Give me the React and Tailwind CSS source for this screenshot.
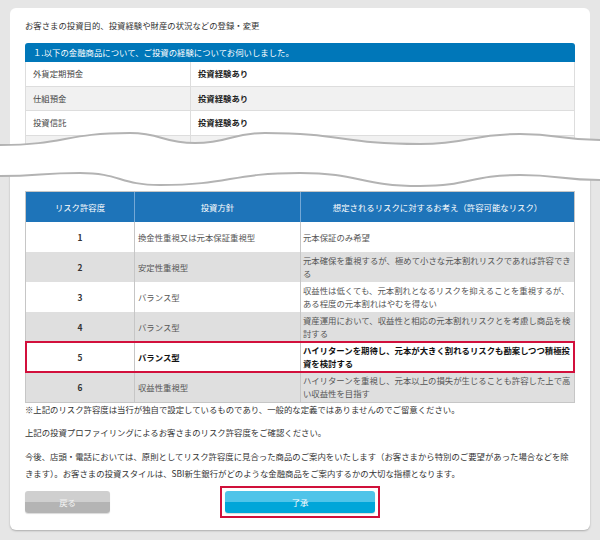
import React from 'react';

const experience = [
    { name: '外貨定期預金', value: '投資経験あり' },
    { name: '仕組預金', value: '投資経験あり' },
    { name: '投資信託', value: '投資経験あり' },
    { name: '', value: '' },
];

const riskRows = [
    { level: '1', policy: '換金性重視又は元本保証重視型', desc: '元本保証のみ希望' },
    { level: '2', policy: '安定性重視型', desc: '元本確保を重視するが、極めて小さな元本割れリスクであれば許容できる' },
    { level: '3', policy: 'バランス型', desc: '収益性は低くても、元本割れとなるリスクを抑えることを重視するが、ある程度の元本割れはやむを得ない' },
    { level: '4', policy: 'バランス型', desc: '資産運用において、収益性と相応の元本割れリスクとを考慮し商品を検討する' },
    { level: '5', policy: 'バランス型', desc: 'ハイリターンを期待し、元本が大きく割れるリスクも勘案しつつ積極投資を検討する', selected: true },
    { level: '6', policy: '収益性重視型', desc: 'ハイリターンを重視し、元本以上の損失が生じることも許容した上で高い収益性を目指す' },
];

// torn-paper break between the two halves of the page
const Wave = () => (
    <div className="relative h-[20px]">
        <svg className="absolute left-0 top-[-20px] z-10" width="600" height="60" viewBox="0 0 600 60">
            <path
                d="M0 15 C65 15 65 3 130 3 C162 3 162 13 195 13 C230 13 230 3 265 3 C342 3 342 14 420 14 C470 14 470 4 520 4 C560 4 560 10 600 10 L600 50 C560 50 560 45 520 45 C470 45 470 56 420 56 C360 56 360 43 300 43 C230 43 230 55 160 55 C120 55 120 43 80 43 C40 43 40 46 0 46 Z"
                fill="#ffffff"
            />
            <path
                d="M0 15 C65 15 65 3 130 3 C162 3 162 13 195 13 C230 13 230 3 265 3 C342 3 342 14 420 14 C470 14 470 4 520 4 C560 4 560 10 600 10"
                fill="none"
                stroke="#b3b3b3"
                strokeWidth="2"
            />
            <path
                d="M0 46 C40 46 40 43 80 43 C120 43 120 55 160 55 C230 55 230 43 300 43 C360 43 360 56 420 56 C470 56 470 45 520 45 C560 45 560 50 600 50"
                fill="none"
                stroke="#b3b3b3"
                strokeWidth="2"
            />
        </svg>
    </div>
);

const App = () => {
    return (
        <div className="w-[600px] h-[540px] overflow-hidden bg-[#e6e6e6] pt-[8px] font-['Noto_Sans_CJK_JP','Noto_Sans',sans-serif] text-[8.4px] text-[#333]">
            {/* upper part */}
            <div className="mx-[10px] h-[142px] overflow-hidden rounded-t-[6px] bg-white px-[15px] pt-[11px]">
                <p className="leading-[12px] text-[#333]">お客さまの投資目的、投資経験や財産の状況などの登録・変更</p>
                <div className="mt-[12px] h-[19px] rounded-t-[3px] bg-[#0077b9] pl-[8px] leading-[19px] text-white">
                    １.以下の金融商品について、ご投資の経験についてお伺いしました。
                </div>
                <div className="border-x border-[#dddddd]">
                    {experience.map((row, i) => (
                        <div
                            key={i}
                            className={`grid h-[24.5px] grid-cols-[165px_1fr] items-center border-b border-[#dddddd] ${i % 2 ? 'bg-[#f1f1f1]' : 'bg-white'}`}
                        >
                            <div className="flex h-full items-center border-r border-[#dddddd] pl-[7px] text-[#444]">{row.name}</div>
                            <div className="pl-[7px] font-bold text-[#222]">{row.value}</div>
                        </div>
                    ))}
                </div>
            </div>

            <Wave />

            {/* lower part */}
            <div className="mx-[10px] h-[360px] rounded-b-[6px] bg-white px-[15px] pt-[21px] shadow-[0_1px_2px_rgba(0,0,0,0.25)]">
                <div className="border border-[#c6c6c6]">
                    <div className="grid h-[30px] grid-cols-[108px_166px_1fr] bg-[#1e74b9] text-white">
                        <div className="flex items-center justify-center">リスク許容度</div>
                        <div className="flex items-center justify-center border-l border-[#74a8d6]">投資方針</div>
                        <div className="flex items-center justify-center border-l border-[#74a8d6]">想定されるリスクに対するお考え（許容可能なリスク）</div>
                    </div>
                    {riskRows.map((row, i) => (
                        <div
                            key={row.level}
                            className={`relative grid h-[30px] grid-cols-[108px_166px_1fr] ${i % 2 ? 'bg-[#dfdfdf]' : 'bg-white'} ${row.selected ? 'z-10 outline-2 outline-[#d2103c] -outline-offset-1' : ''}`}
                        >
                            <div className="flex items-center justify-center font-bold text-[#333]">{row.level}</div>
                            <div className={`flex items-center border-l border-[#c6c6c6] pl-[3px] ${row.selected ? 'font-bold text-[#111]' : 'text-[#555]'}`}>
                                {row.policy}
                            </div>
                            <div className={`flex items-center border-l border-[#c6c6c6] pl-[2px] pr-[1px] leading-[13px] ${row.selected ? 'font-bold text-[#111]' : 'text-[#555]'}`}>
                                {row.desc}
                            </div>
                        </div>
                    ))}
                </div>

                <p className="leading-[12px] text-[#333]">※上記のリスク許容度は当行が独自で設定しているものであり、一般的な定義ではありませんのでご留意ください。</p>
                <p className="mt-[11px] leading-[12px] text-[#333]">上記の投資プロファイリングによるお客さまのリスク許容度をご確認ください。</p>
                <p className="mt-[10px] leading-[17px] text-[#333]">
                    今後、店頭・電話においては、原則としてリスク許容度に見合った商品のご案内をいたします（お客さまから特別のご要望があった場合などを除きます）。お客さまの投資スタイルは、SBI新生銀行がどのような金融商品をご案内するかの大切な指標となります。
                </p>

                <div className="mt-[4px] flex items-center">
                    <button className="h-[22px] w-[85px] rounded-[3px] bg-[linear-gradient(#cfcfcf_50%,#b4b4b4_50%)] text-[8.4px] text-[#f4f4f4] shadow-[0_1px_1px_rgba(0,0,0,0.15)]">
                        戻る
                    </button>
                    <div className="ml-[110px] h-[32px] w-[160px] border-2 border-[#d0103a] p-[3px]">
                        <button className="h-full w-full rounded-[3px] bg-[linear-gradient(#4fc4e9_50%,#00a6d9_50%)] text-[8.4px] text-white shadow-[0_1px_1px_rgba(0,0,0,0.15)]">
                            了承
                        </button>
                    </div>
                </div>
            </div>
        </div>
    );
};

export default App;
